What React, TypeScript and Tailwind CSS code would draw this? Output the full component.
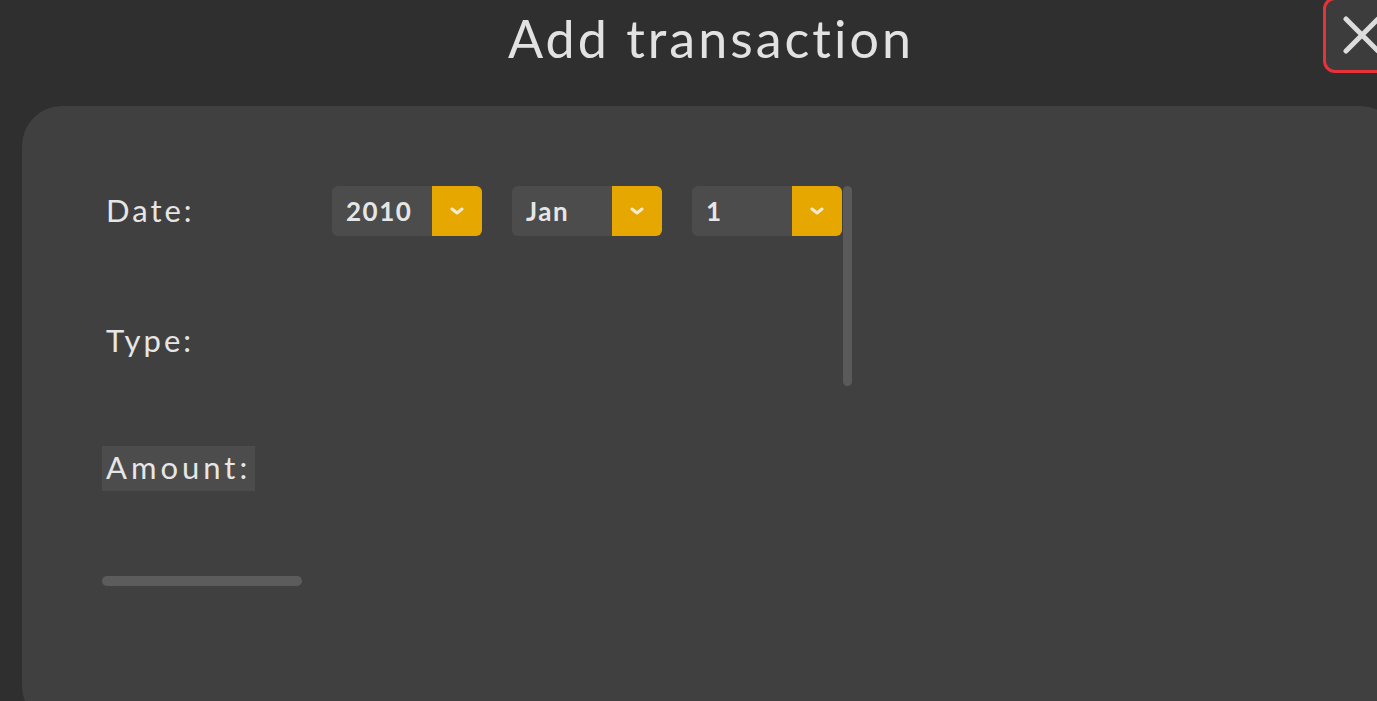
import React from 'react';

const font = { fontFamily: '"Lato", "Open Sans", sans-serif' };

const Chevron = () => (
  <svg width="14" height="9" viewBox="0 0 14 9" fill="none">
    <polyline points="2,2 7,6 12,2" stroke="#f3ead2" strokeWidth="3" strokeLinecap="round" strokeLinejoin="round" />
  </svg>
);

const Select = ({ value }: { value: string }) => (
  <div className="flex h-[50px] w-[150px] overflow-hidden rounded-md bg-[#4c4c4c]">
    <div className="flex flex-1 items-center pl-[14px] text-[26px] font-bold tracking-[1.5px] text-[#e6e6e6]">{value}</div>
    <div className="flex w-[50px] items-center justify-center bg-[#e6a800]">
      <Chevron />
    </div>
  </div>
);

export default function App() {
  return (
    <div className="h-[701px] w-[1377px] overflow-hidden bg-[#2f2f2f]" style={font}>
      <div className="flex w-[1422px] flex-col">
        {/* header */}
        <div className="relative flex h-[106px] justify-center">
          <h1 className="mt-[8px] text-[52px] leading-[60px] tracking-[3px] text-[#e2e2e2]">Add transaction</h1>
          <button className="absolute right-[22px] top-[-3px] flex h-[76px] w-[77px] items-center justify-center rounded-[12px] border-[3px] border-[#e8323a] bg-[#3c3c3c]">
            <svg width="40" height="40" viewBox="0 0 40 40">
              <path d="M4 4 L36 36 M36 4 L4 36" stroke="#dddddd" strokeWidth="5" strokeLinecap="round" />
            </svg>
          </button>
        </div>

        {/* card */}
        <div className="mx-[22px] h-[620px] rounded-[40px] bg-[#404040] pl-[80px] pt-[80px]">
          <div className="flex flex-col gap-[80px]">
            <div className="flex h-[50px] items-center">
              <div className="w-[230px] px-1 pb-[2px] text-[31px] leading-[40px] tracking-[3px] text-[#e6e6e6]">Date:</div>
              <div className="relative flex gap-[30px]">
                <Select value="2010" />
                <Select value="Jan" />
                <Select value="1" />
                <div className="absolute left-[511px] top-0 h-[200px] w-[9px] rounded-full bg-[#5a5a5a]" />
              </div>
            </div>
            <div className="flex h-[50px] items-center">
              <div className="w-[230px] px-1 pb-[2px] text-[31px] leading-[40px] tracking-[3px] text-[#e6e6e6]">Type:</div>
            </div>
            <div className="flex items-start">
              <div className="h-[45px] bg-[#4c4c4c] pl-1 pr-[4px] text-[31px] leading-[43px] tracking-[4px] text-[#e6e6e6]">Amount:</div>
            </div>
          </div>
          <div className="mt-[85px] h-[10px] w-[200px] rounded-full bg-[#5c5c5c]" />
        </div>
      </div>
    </div>
  );
}
